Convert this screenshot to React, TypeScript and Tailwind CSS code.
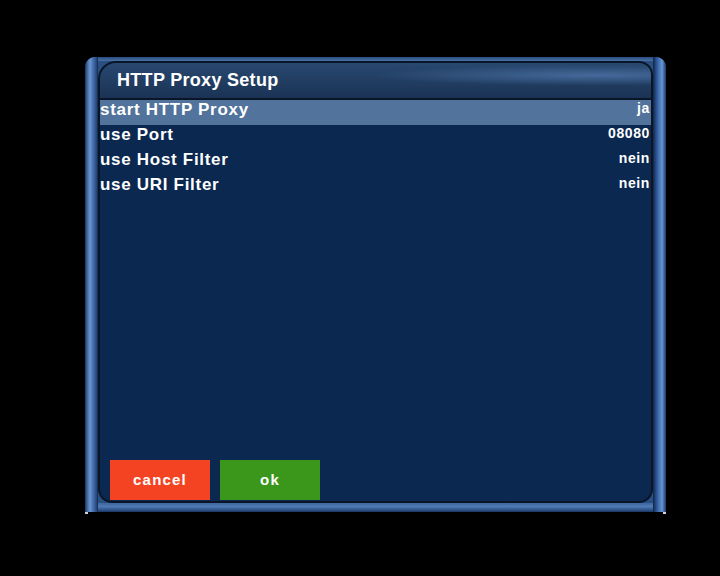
const rows = [
  { label: 'start HTTP Proxy', value: 'ja', active: true },
  { label: 'use Port', value: '08080', active: false },
  { label: 'use Host Filter', value: 'nein', active: false },
  { label: 'use URI Filter', value: 'nein', active: false },
];

export default function App() {
  return (
    <div className="w-[720px] h-[576px] bg-black pt-[57px] pl-[85px] font-['Liberation_Sans',Arial,sans-serif]">
      {/* outer blue pipe frame */}
      <div className="flex w-[581px] h-[455px] rounded-t-[10px] bg-[#2b4f82]">
        {/* left pipe */}
        <div className="w-[13px] rounded-tl-[10px] bg-[linear-gradient(to_right,#1a3562_0%,#4f7cb8_25%,#6a94cc_40%,#3b64a0_70%,#23467a_90%,#102640_100%)]" />

        {/* center */}
        <div className="flex flex-col w-[555px]">
          <div className="h-[4px] bg-[linear-gradient(to_bottom,#2a4d7f,#4a71a6)]" />

          <div className="flex flex-col flex-1 border-2 border-[#0a1628] rounded-tl-[18px] rounded-tr-[14px] rounded-b-[14px] overflow-hidden bg-[#0a2850]">
            {/* title */}
            <div className="h-[37px] pl-[17px] border-b-2 border-[#0a1628] bg-[radial-gradient(ellipse_at_90%_35%,#44699a_0%,transparent_32%),linear-gradient(to_bottom,#28486f,#1b3355)]">
              <span className="text-[18px] leading-[35px] font-bold text-white tracking-[0.3px]">HTTP Proxy Setup</span>
            </div>

            {/* list */}
            <div className="flex flex-col flex-1">
              {rows.map((row) => (
                <div
                  key={row.label}
                  className={`flex justify-between items-start h-[25px] pr-[1px] ${row.active ? 'bg-[#52739b]' : ''}`}
                >
                  <span className="text-[17px] leading-[19px] font-bold text-white tracking-[0.7px]">{row.label}</span>
                  <span className="text-[14px] leading-[16px] font-bold text-white tracking-[0.6px]">{row.value}</span>
                </div>
              ))}

              <div className="flex-1" />

              <div className="flex gap-[10px] pl-[10px] mb-[1px]">
                <button className="w-[100px] h-[40px] bg-[#f44323] text-white text-[15px] font-bold tracking-[1.2px]">
                  cancel
                </button>
                <button className="w-[100px] h-[40px] bg-[#3b961c] text-white text-[15px] font-bold tracking-[1.2px]">
                  ok
                </button>
              </div>
            </div>
          </div>

          <div className="h-[9px] bg-[linear-gradient(to_bottom,#3e66a0,#4f7ab4_40%,#2b4f82_80%,#1a3562)]" />
        </div>

        {/* right pipe */}
        <div className="w-[13px] rounded-tr-[10px] bg-[linear-gradient(to_right,#102640_0%,#2a5090_25%,#4a78b8_50%,#6a95cc_70%,#3a64a0_85%,#1e3a66_100%)]" />
      </div>
      <div className="flex justify-between w-[581px] h-[3px]">
        <div className="w-[3px] h-[2px] bg-[#c8d4e4]" />
        <div className="w-[3px] h-[2px] bg-[#c8d4e4]" />
      </div>
    </div>
  );
}
